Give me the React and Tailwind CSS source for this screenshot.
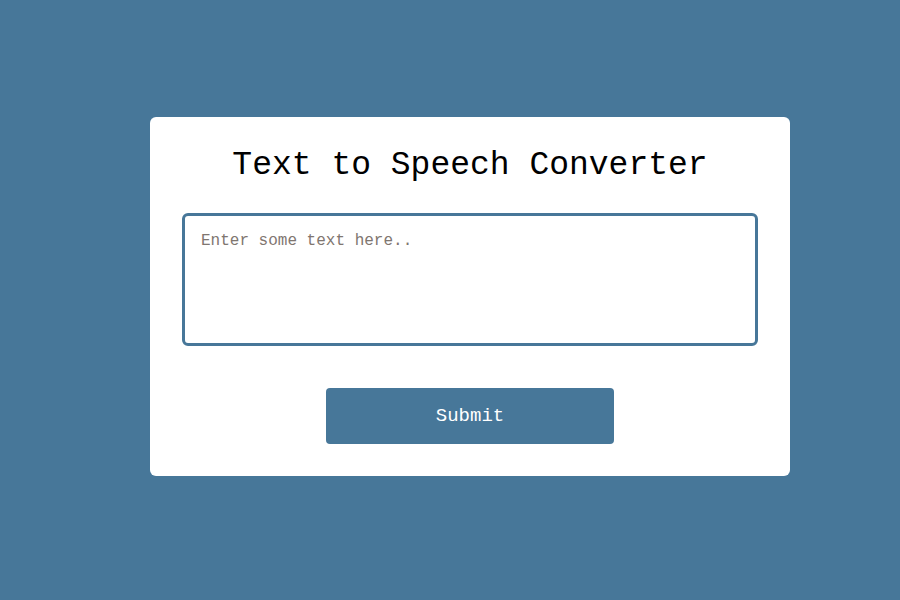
import React, { useState } from 'react';

export default function App() {
  const [text, setText] = useState('');

  return (
    <div className="w-[900px] h-[600px] bg-[#477799] pt-[117px] pl-[150px]" style={{ fontFamily: '"Liberation Mono", monospace' }}>
      <div className="w-[640px] h-[359px] bg-white rounded-md px-8 pt-[30px] flex flex-col">
        <h1 className="text-[33px] leading-[37px] text-black text-center">Text to Speech Converter</h1>
        <textarea
          value={text}
          onChange={e => setText(e.target.value)}
          placeholder="Enter some text here.."
          className="mt-[29px] w-full h-[133px] border-[3px] border-[#477799] rounded-md p-4 text-[16px] leading-[19px] resize-none outline-none placeholder:text-[#7f7670]"
        />
        <button className="mt-[42px] mx-auto w-[288px] h-[56px] bg-[#477799] text-white text-[19px] rounded-[4px]">Submit</button>
      </div>
    </div>
  );
}
